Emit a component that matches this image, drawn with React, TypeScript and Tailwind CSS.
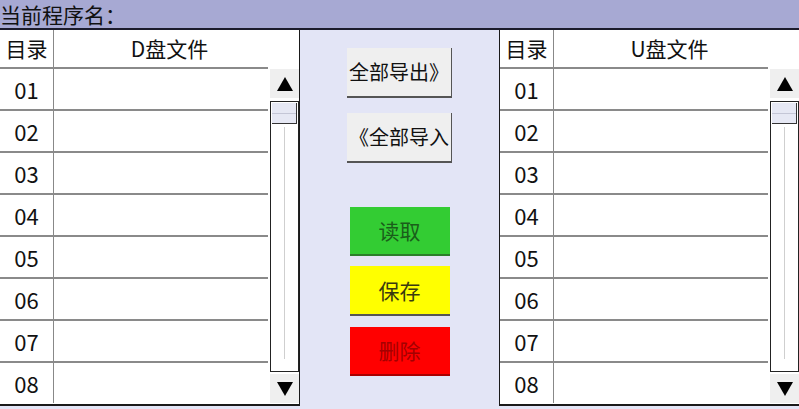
import React from "react";

const rows = ["01", "02", "03", "04", "05", "06", "07", "08"];

function ScrollBar() {
  return (
    <div className="flex w-[29px] shrink-0 flex-col pt-[2px]">
      <div className="flex h-[29px] items-center justify-center bg-[#efefef]">
        <svg width="16" height="14" viewBox="0 0 16 14">
          <polygon points="8,0 16,14 0,14" fill="#000" />
        </svg>
      </div>
      <div className="mt-[3px] flex h-[271px] flex-col border border-[#222] bg-white px-[1px] pt-[1px]">
        <div className="h-[21px] border-b border-r border-[#333] bg-[#e6e8f4]">
          <div className="mt-[10px] h-px bg-[#c4c6d6]" />
        </div>
        <div className="mx-auto mt-[3px] h-[232px] w-px bg-[#cfcfcf]" />
      </div>
      <div className="mt-[2px] flex h-[29px] items-center justify-center bg-[#efefef]">
        <svg width="16" height="14" viewBox="0 0 16 14">
          <polygon points="0,0 16,0 8,14" fill="#000" />
        </svg>
      </div>
    </div>
  );
}

function FilePanel({ title, side }: { title: string; side: "left" | "right" }) {
  return (
    <div
      className={
        "flex h-[376px] w-[300px] shrink-0 flex-col border-b-2 border-[#1a1a1a] bg-white " +
        (side === "left" ? "border-r" : "border-l")
      }
    >
      <div className="flex h-[37px] shrink-0">
        <div className="flex w-[54px] items-center justify-center border-r border-[#888] text-[21px] leading-none">
          目录
        </div>
        <div className="flex flex-1 items-center justify-center pr-[14px] text-[21px] leading-none">
          {title}
        </div>
      </div>
      <div className="flex flex-1">
        <div className="mr-[2px] flex flex-1 flex-col">
          {rows.map((r) => (
            <div key={r} className="flex h-[42px] border-t-2 border-[#8a8a8a]">
              <div className="flex w-[54px] items-center justify-center border-r border-[#888] text-[22px] leading-none">
                {r}
              </div>
              <div className="flex-1" />
            </div>
          ))}
        </div>
        <ScrollBar />
      </div>
    </div>
  );
}

export default function App() {
  return (
    <div className="flex h-[409px] w-[799px] flex-col overflow-hidden bg-[#e3e5f6] font-['Noto_Sans_CJK_SC','Microsoft_YaHei',sans-serif] text-[#111]">
      <div className="flex h-[30px] shrink-0 items-center border-b-2 border-[#1c1c2c] bg-[#a7a9d3] text-[21px] leading-none">
        当前程序名：
      </div>
      <div className="flex">
        <FilePanel title="D盘文件" side="left" />
        <div className="flex flex-1 flex-col items-center pt-[18px]">
          <button className="h-[50px] w-[105px] whitespace-nowrap border-b-2 border-r border-[#555] bg-[#efefef] px-0 text-[20px] leading-none">
            全部导出》
          </button>
          <button className="mt-[15px] h-[50px] w-[105px] whitespace-nowrap border-b-2 border-r border-[#555] bg-[#efefef] px-0 text-[20px] leading-none">
            《全部导入
          </button>
          <button className="mt-[44px] h-[49px] w-[100px] border-b-2 border-[#2a7f2a] bg-[#33cc33] text-[21px] leading-none text-[#1a5e1a]">
            读取
          </button>
          <button className="mt-[10px] h-[50px] w-[100px] border-b-2 border-[#555] bg-[#ffff00] text-[21px] leading-none text-[#3a3a10]">
            保存
          </button>
          <button className="mt-[11px] h-[49px] w-[100px] border-b-2 border-[#a00] bg-[#ff0000] text-[21px] leading-none text-[#a40000]">
            删除
          </button>
        </div>
        <FilePanel title="U盘文件" side="right" />
      </div>
    </div>
  );
}
